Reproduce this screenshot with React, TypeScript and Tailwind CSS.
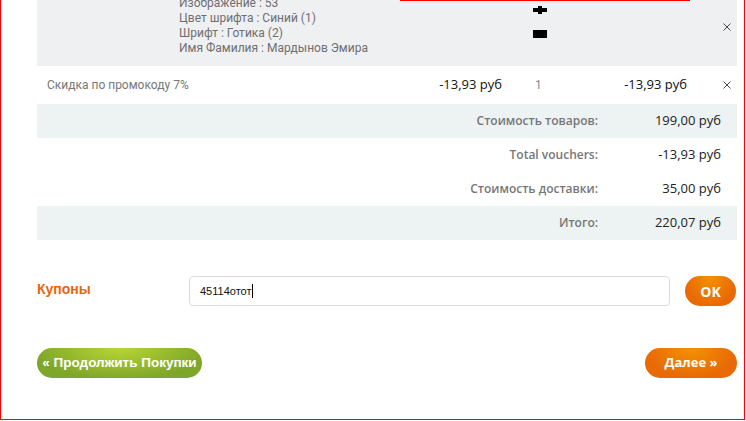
import React from "react";

const roboto = { fontFamily: "Roboto, 'Liberation Sans', sans-serif" };
const open = { fontFamily: "'Open Sans', 'Liberation Sans', sans-serif" };
const arial = { fontFamily: "'Liberation Sans', Arial, sans-serif" };

function XMark() {
  return (
    <svg width="8" height="8" viewBox="0 0 8 8" className="block">
      <path d="M0.5 0.5L7.5 7.5M7.5 0.5L0.5 7.5" stroke="#333" strokeWidth="0.9" />
    </svg>
  );
}

function SummaryRow({ label, value, gray }: { label: string; value: string; gray?: boolean }) {
  return (
    <div className={`flex h-[34px] items-center ${gray ? "bg-[#edf2f2]" : "bg-white"}`}>
      <div className="w-[561px] text-right text-[12px] font-semibold text-[#777]" style={open}>
        {label}
      </div>
      <div className="w-[123px] text-right text-[13px] text-[#222]" style={open}>
        {value}
      </div>
    </div>
  );
}

export default function App() {
  return (
    <div className="relative h-[421px] w-[746px] overflow-hidden bg-white">
      <div className="absolute left-[400px] top-0 h-px w-[290px] bg-[#ff0000]" />
      <div className="flex h-[420px] w-[745px] flex-col border-b border-l border-r border-[#ff0000] pl-[36px] pr-[7px]">
        {/* product row */}
        <div className="flex h-[66px] bg-[#eff0f2]">
          <div className="mt-[-4px] w-[496px] pl-[142px] text-[12px] leading-[15px] text-[#6f6f6f]" style={roboto}>
            <div>Изображение : 53</div>
            <div>Цвет шрифта : Синий (1)</div>
            <div>Шрифт : Готика (2)</div>
            <div>Имя Фамилия : Мардынов Эмира</div>
          </div>
          <div className="flex w-[154px] flex-col pt-[6px]">
            <div className="relative h-[8px] w-[14px]">
              <div className="absolute left-0 top-[2px] h-[4px] w-[14px] bg-black" />
              <div className="absolute left-[5px] top-0 h-[8px] w-[4px] bg-black" />
            </div>
            <div className="mt-[16px] h-[8px] w-[14px] bg-black" />
          </div>
          <div className="pl-[36px] pt-[23px]">
            <XMark />
          </div>
        </div>
        {/* discount row */}
        <div className="flex h-[38px] items-center bg-white">
          <div className="w-[385px] pl-[10px] text-[12px] text-[#777]" style={roboto}>
            Скидка по промокоду 7%
          </div>
          <div className="w-[80px] text-right text-[13px] text-[#111]" style={open}>
            -13,93 руб
          </div>
          <div className="w-[65px] pl-[33px] text-[12px] text-[#888]" style={roboto}>
            1
          </div>
          <div className="w-[120px] text-right text-[13px] text-[#111]" style={open}>
            -13,93 руб
          </div>
          <div className="pl-[36px]">
            <XMark />
          </div>
        </div>
        {/* summary */}
        <SummaryRow label="Стоимость товаров:" value="199,00 руб" gray />
        <SummaryRow label="Total vouchers:" value="-13,93 руб" />
        <SummaryRow label="Стоимость доставки:" value="35,00 руб" />
        <SummaryRow label="Итого:" value="220,07 руб" gray />
        {/* coupons */}
        <div className="mt-[36px] flex items-center">
          <div className="mt-[-3px] w-[152px] text-[14px] font-bold text-[#e8650c]" style={arial}>
            Купоны
          </div>
          <div className="flex h-[30px] w-[481px] items-center rounded-[4px] border border-[#dcdcdc] bg-white">
            <div className="w-[10px] shrink-0" />
            <span className="text-[11px] text-[#111]" style={arial}>45114отот</span>
            <span className="ml-[1px] h-[14px] w-px bg-black" />
          </div>
          <button
            className="ml-[15px] h-[30px] w-[51px] rounded-full bg-[radial-gradient(ellipse_at_50%_0%,#f39200,#e96a05_70%)] text-[14px] font-bold text-white"
            style={open}
          >
            OK
          </button>
        </div>
        {/* buttons */}
        <div className="mt-[42px] flex items-center justify-between">
          <button
            className="h-[30px] w-[165px] rounded-full bg-[radial-gradient(ellipse_at_50%_0%,#b8d636,#7ea628_75%)] text-[13.5px] font-bold text-white"
            style={arial}
          >
            « Продолжить Покупки
          </button>
          <button
            className="h-[30px] w-[92px] rounded-full bg-[radial-gradient(ellipse_at_50%_0%,#f39200,#e96a05_70%)] text-[13px] font-bold text-white"
            style={open}
          >
            Далее »
          </button>
        </div>
      </div>
    </div>
  );
}
